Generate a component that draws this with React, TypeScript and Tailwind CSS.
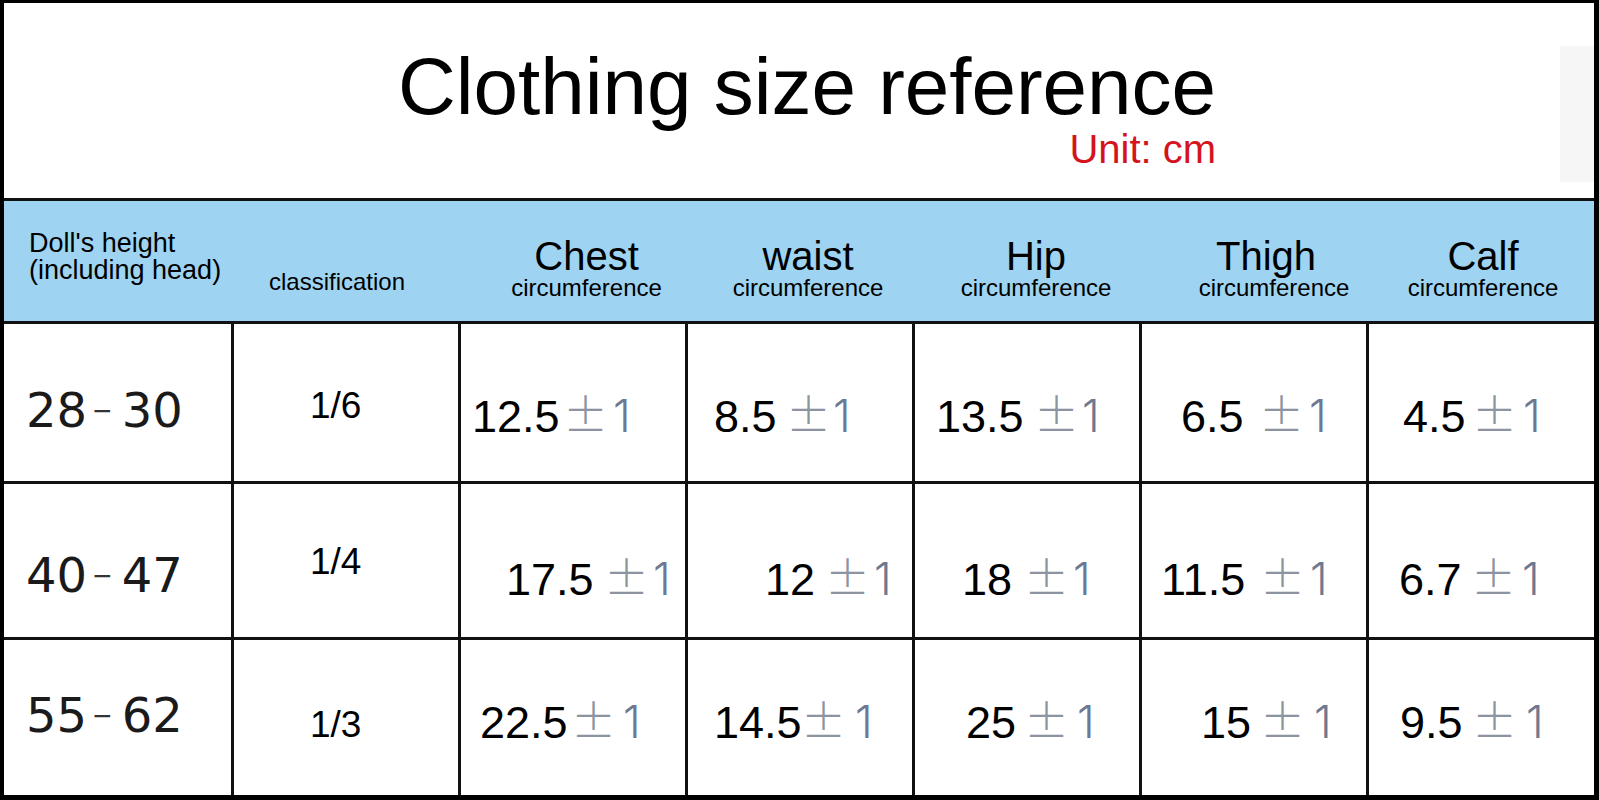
import React from "react";

type Val = { n: string; pl: string; w1: string; w2: string };
type Row = {
  a: string;
  b: string;
  rangePt: string;
  frac: string;
  fracPt: string;
  valPt: string;
  h: string;
  vals: Val[];
};

const rows: Row[] = [
  {
    a: "28",
    b: "30",
    rangePt: "pt-[62px]",
    frac: "1/6",
    fracPt: "pt-[63px]",
    valPt: "pt-[66px]",
    h: "h-[160px] border-b-[3px]",
    vals: [
      { n: "12.5", pl: "pl-[11px]", w1: "w-[91px]", w2: "w-[50px]" },
      { n: "8.5", pl: "pl-[26px]", w1: "w-[72px]", w2: "w-[47px]" },
      { n: "13.5", pl: "pl-[21px]", w1: "w-[98px]", w2: "w-[48px]" },
      { n: "6.5", pl: "pl-[39px]", w1: "w-[78px]", w2: "w-[50px]" },
      { n: "4.5", pl: "pl-[34px]", w1: "w-[69px]", w2: "w-[51px]" },
    ],
  },
  {
    a: "40",
    b: "47",
    rangePt: "pt-[67px]",
    frac: "1/4",
    fracPt: "pt-[59px]",
    valPt: "pt-[69px]",
    h: "h-[156px] border-b-[3px]",
    vals: [
      { n: "17.5", pl: "pl-[45px]", w1: "w-[98px]", w2: "w-[49px]" },
      { n: "12", pl: "pl-[77px]", w1: "w-[60px]", w2: "w-[49px]" },
      { n: "18", pl: "pl-[47px]", w1: "w-[62px]", w2: "w-[49px]" },
      { n: "11.5", pl: "pl-[19px]", w1: "w-[99px]", w2: "w-[50px]" },
      { n: "6.7", pl: "pl-[30px]", w1: "w-[72px]", w2: "w-[51px]" },
    ],
  },
  {
    a: "55",
    b: "62",
    rangePt: "pt-[51px]",
    frac: "1/3",
    fracPt: "pt-[66px]",
    valPt: "pt-[56px]",
    h: "flex-1",
    vals: [
      { n: "22.5", pl: "pl-[19px]", w1: "w-[91px]", w2: "w-[52px]" },
      { n: "14.5", pl: "pl-[26px]", w1: "w-[87px]", w2: "w-[54px]" },
      { n: "25", pl: "pl-[51px]", w1: "w-[58px]", w2: "w-[53px]" },
      { n: "15", pl: "pl-[59px]", w1: "w-[59px]", w2: "w-[54px]" },
      { n: "9.5", pl: "pl-[31px]", w1: "w-[72px]", w2: "w-[54px]" },
    ],
  },
];

const heads = [
  { word: "Chest", cls: "pl-[24px]", wcls: "" },
  { word: "waist", cls: "pl-[13px]", wcls: "" },
  { word: "Hip", cls: "pl-[15px]", wcls: "" },
  { word: "Thigh", cls: "pl-[37px]", wcls: "pr-[16px]" },
  { word: "Calf", cls: "pl-[3px]", wcls: "" },
];

const GRID =
  "grid grid-cols-[230px_227px_227px_227px_227px_227px_1fr]";

export default function App() {
  return (
    <div className="w-[1599px] h-[800px] bg-white border-black border-t-[3px] border-l-4 border-r-[5px] border-b-[5px] flex flex-col overflow-hidden font-['Liberation_Sans',Arial,sans-serif] text-black">
      {/* Title */}
      <div className="relative h-[198px] shrink-0 border-b-[3px] border-[#111] flex justify-center pt-[44px] pl-[16px]">
        <div className="flex flex-col items-end">
          <div className="text-[80px] leading-[80px] whitespace-nowrap">
            Clothing size reference
          </div>
          <div className="mt-[2px] text-[40px] leading-[40px] text-[#d5131c] whitespace-nowrap">
            Unit: cm
          </div>
        </div>
        <div className="absolute right-0 top-[43px] w-[34px] h-[136px] bg-[#f6f6f6]" />
      </div>

      {/* Header */}
      <div
        className={`${GRID} h-[123px] shrink-0 border-b-[3px] border-[#111] bg-[#9ed3f1]`}
      >
        <div className="pl-[25px] pt-[29px] text-[27px] leading-[27px] whitespace-nowrap">
          <div>Doll's height</div>
          <div>(including head)</div>
        </div>
        <div className="pl-[35px] pt-[69px] text-[24px] leading-[24px] whitespace-nowrap">
          classification
        </div>
        {heads.map((h) => (
          <div
            key={h.word}
            className={`flex flex-col items-center pt-[35px] ${h.cls}`}
          >
            <div
              className={`text-[40px] leading-[40px] whitespace-nowrap ${h.wcls}`}
            >
              {h.word}
            </div>
            <div className="text-[24px] leading-[24px] whitespace-nowrap">
              circumference
            </div>
          </div>
        ))}
      </div>

      {/* Rows */}
      {rows.map((r) => (
        <div key={r.a} className={`${GRID} ${r.h} shrink-0 border-[#111]`}>
          <div
            className={`border-r-[3px] border-[#111] pl-[22px] ${r.rangePt} text-[48px] leading-[48px] text-[#1a1a1a] whitespace-nowrap font-['DejaVu_Sans',sans-serif]`}
          >
            <span>{r.a}</span>
            <span className="text-[32px] leading-[20px] align-[5px] ml-[6px] mr-[10px] text-[#333] font-['Liberation_Sans',Arial,sans-serif]">
              −
            </span>
            <span>{r.b}</span>
          </div>
          <div
            className={`border-r-[3px] border-[#111] pl-[76px] ${r.fracPt} text-[37px] leading-[37px] whitespace-nowrap`}
          >
            {r.frac}
          </div>
          {r.vals.map((v, i) => (
            <div
              key={i}
              className={`${
                i < 4 ? "border-r-[3px] border-[#111]" : ""
              } ${v.pl} ${r.valPt}`}
            >
              <div className="flex items-baseline whitespace-nowrap">
                <span className={`${v.w1} text-[45px] leading-[45px] text-black`}>
                  {v.n}
                </span>
                <span
                  className={`${v.w2} text-[45px] leading-[45px] text-[#8c94a2] font-light font-['Noto_Sans_CJK_SC',sans-serif]`}
                >
                  ±
                </span>
                <span className="text-[45px] leading-[45px] text-[#6d7892] font-light font-['Inter',sans-serif]">
                  1
                </span>
              </div>
            </div>
          ))}
        </div>
      ))}
    </div>
  );
}
